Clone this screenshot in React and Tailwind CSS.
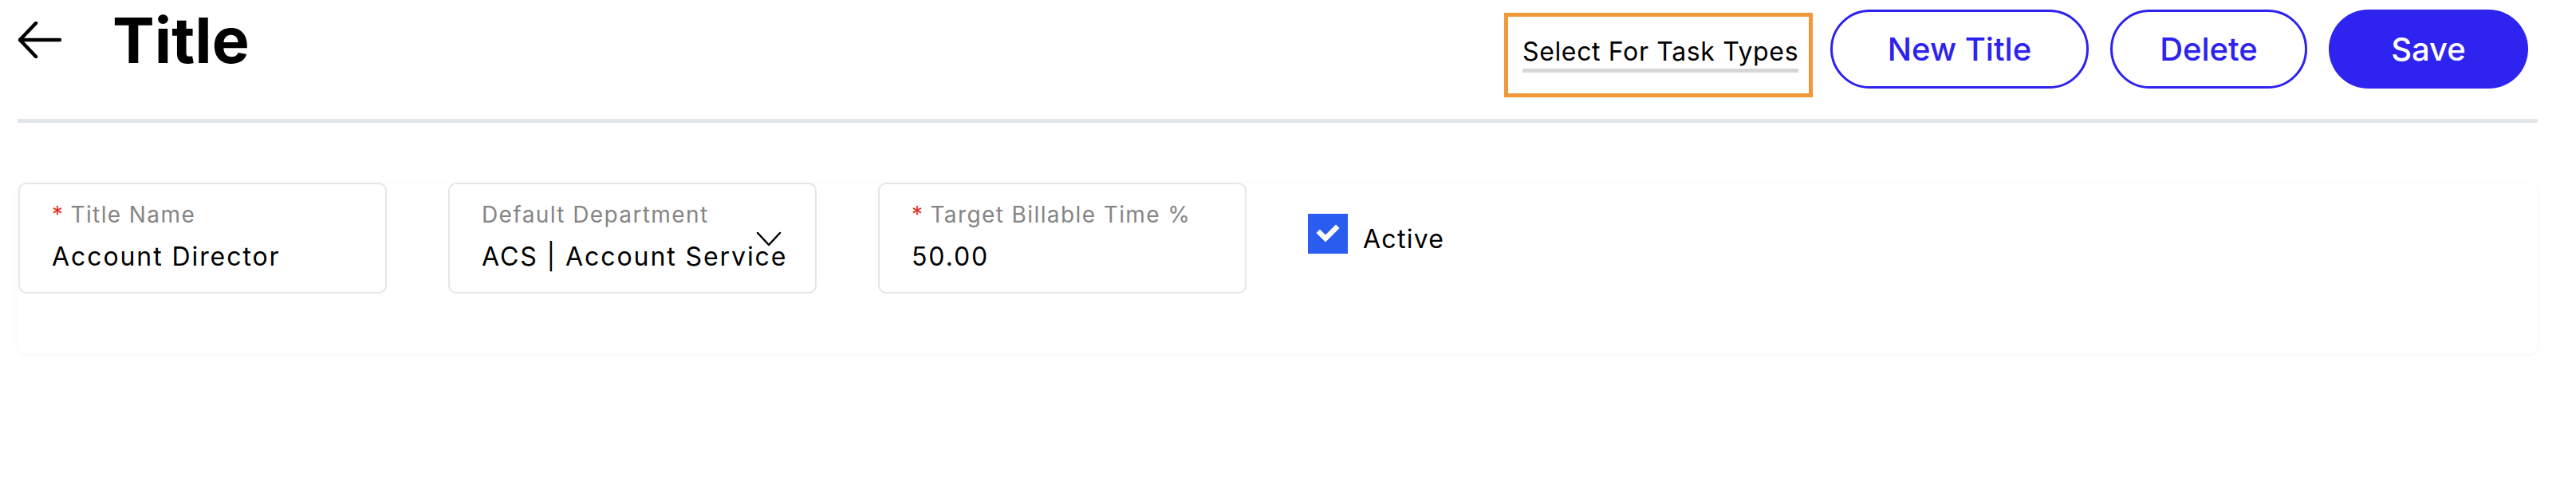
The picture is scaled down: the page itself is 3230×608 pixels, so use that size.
import React from "react";

const Field = ({ label, value, required, chevron }) => (
    <div className="relative w-[462px] h-[139px] shrink-0 border-2 border-[#e3e6ea] rounded-[10px] pl-[40px] pt-[21px] flex flex-col bg-white">
        <div className="text-[28px] leading-[34px] text-[#858585] whitespace-nowrap tracking-[0.05em]">
            {required && <span className="text-[#e5352b] mr-[8px]">*</span>}
            {label}
        </div>
        <div className="mt-[16px] text-[32px] leading-[39px] text-black whitespace-nowrap tracking-[0.06em]">
            {value}
        </div>
        {chevron && (
            <svg
                className="absolute left-[384px] top-[59px]"
                width="32"
                height="20"
                viewBox="0 0 32 20"
                fill="none"
                stroke="#000"
                strokeWidth="2.5"
                strokeLinecap="round"
                strokeLinejoin="round"
            >
                <polyline points="2,2 16,17 30,2" />
            </svg>
        )}
    </div>
);

const App = () => {
    return (
        <div
            className="w-[3230px] h-[608px] bg-white overflow-hidden"
            style={{ fontFamily: "Inter, 'Liberation Sans', sans-serif" }}
        >
            <div className="pl-[22px] pr-[48px] pt-[12px]">
                {/* header */}
                <div className="flex items-start justify-between">
                    <div className="flex items-center">
                        <svg
                            className="ml-[1px]"
                            width="54"
                            height="46"
                            viewBox="0 0 54 46"
                            fill="none"
                            stroke="#000"
                            strokeWidth="4.5"
                            strokeLinecap="round"
                            strokeLinejoin="round"
                        >
                            <path d="M2 23 H52" />
                            <path d="M22 2 L2 23 L22 44" />
                        </svg>
                        <h1 className="ml-[64px] text-[79px] leading-[76px] font-bold text-black">Title</h1>
                    </div>
                    <div className="flex items-start pr-[12px]">
                        <div className="mt-[4px] w-[387px] h-[106px] border-[5px] border-[#f0993a] pl-[18px] pt-[22px]">
                            <div className="inline-block text-[32px] leading-[43px] text-black border-b-[5px] border-[#d6d6d6] whitespace-nowrap tracking-[0.02em]">
                                Select For Task Types
                            </div>
                        </div>
                        <button className="ml-[22px] w-[324px] h-[99px] rounded-full border-[3px] border-[#2d22ef] text-[#2d22ef] text-[40px] font-medium bg-white">
                            New Title
                        </button>
                        <button className="ml-[27px] w-[247px] h-[99px] rounded-full border-[3px] border-[#2d22ef] text-[#2d22ef] text-[40px] font-medium bg-white">
                            Delete
                        </button>
                        <button className="ml-[27px] w-[250px] h-[99px] rounded-full bg-[#2e23ef] text-white text-[40px] font-medium">
                            Save
                        </button>
                    </div>
                </div>

                <div className="mt-[27px] h-[5px] bg-[#e2e5e9]" />

                {/* form panel */}
                <div className="mt-[75px] h-[215px] rounded-[12px] bg-white shadow-[0_1px_5px_rgba(0,0,0,0.05)] pl-[1px] flex items-start gap-[77px]">
                    <Field label="Title Name" value="Account Director" required />
                    <Field label="Default Department" value="ACS | Account Service" chevron />
                    <Field label="Target Billable Time %" value="50.00" required />
                    <div className="flex items-start pt-[39px]">
                        <div className="w-[50px] h-[50px] bg-[#2a5cf0] flex items-center justify-center">
                            <svg width="50" height="50" viewBox="0 0 50 50" fill="none" stroke="#fff" strokeWidth="6.5" strokeLinecap="square">
                                <polyline points="15,24 22,31 35,18" />
                            </svg>
                        </div>
                        <span className="ml-[19px] mt-[12px] text-[32px] leading-[39px] text-black tracking-[0.04em]">Active</span>
                    </div>
                </div>
            </div>
        </div>
    );
};

export default App;
